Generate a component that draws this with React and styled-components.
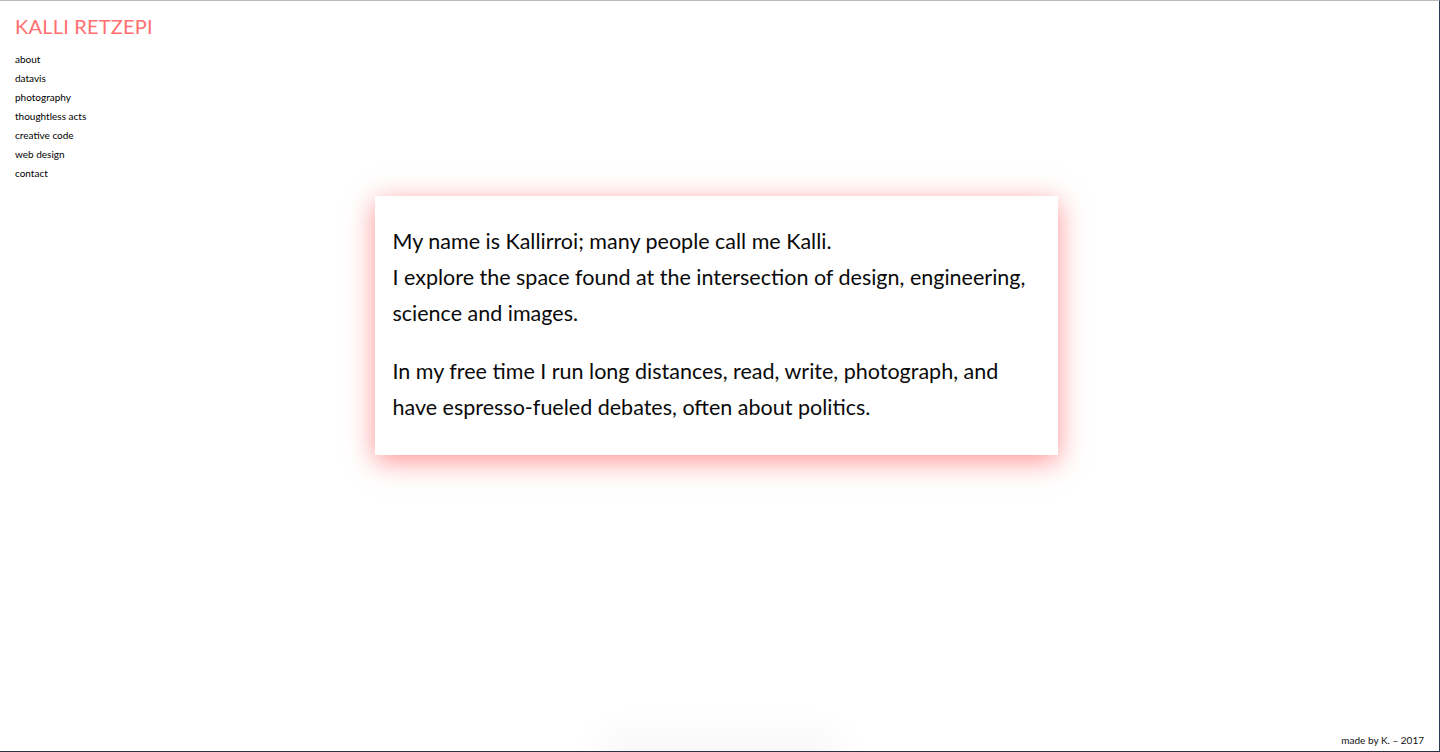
import React from 'react';
import styled, { createGlobalStyle } from 'styled-components';

const GlobalStyle = createGlobalStyle`
  html, body {
    margin: 0;
    padding: 0;
    background: #fff;
  }
  body {
    font-family: Lato, "Open Sans", sans-serif;
    color: #111;
  }
`;

const Frame = styled.div`
  box-sizing: border-box;
  height: 752px;
  display: flex;
  flex-direction: column;
  border-top: 1px solid #b8b8b8;
  border-right: 1px solid #2f3b55;
  border-bottom: 1px solid #2a3344;
  overflow: hidden;
`;

const Header = styled.header`
  padding: 13px 0 0 15px;
`;

const Title = styled.h1`
  margin: 0;
  font-size: 20px;
  font-weight: 400;
  letter-spacing: 0.2px;
  color: #ff6f6f;
  line-height: 24px;
`;

const Nav = styled.nav`
  display: flex;
  flex-direction: column;
  margin-top: 12px;
`;

const NavLink = styled.a`
  font-size: 10px;
  line-height: 19px;
  color: #000;
  text-decoration: none;
`;

const Main = styled.main`
  flex: 1;
  display: flex;
  justify-content: center;
  padding: 13px 7px 0 0;
`;

const Card = styled.section`
  box-sizing: border-box;
  width: 683px;
  height: 259px;
  padding: 27px 18px;
  background: #fff;
  box-shadow: 0 6px 26px rgba(255, 100, 100, 0.7);
  font-size: 21.5px;
  line-height: 36px;
  color: #0a0a0a;
`;

const Para = styled.p`
  margin: 0 0 22px;
`;

const Footer = styled.footer`
  position: relative;
  display: flex;
  justify-content: flex-end;
  padding: 0 15px 4px 0;
  font-size: 10px;
  line-height: 14px;
`;

const Tab = styled.div`
  position: absolute;
  left: 613px;
  bottom: -1px;
  width: 214px;
  height: 1px;
  background: #ddd;
  box-shadow: 0 0 40px 12px rgba(0, 0, 0, 0.06);
`;

const links = [
  'about',
  'datavis',
  'photography',
  'thoughtless acts',
  'creative code',
  'web design',
  'contact',
];

const App = () => {
  return (
    <>
      <GlobalStyle />
      <Frame>
        <Header>
          <Title>KALLI RETZEPI</Title>
          <Nav>
            {links.map((link) => (
              <NavLink key={link} href="#">
                {link}
              </NavLink>
            ))}
          </Nav>
        </Header>
        <Main>
          <Card>
            <Para>
              My name is Kallirroi; many people call me Kalli.
              <br />
              I explore the space found at the intersection of design,
              engineering, science and images.
            </Para>
            <Para>
              In my free time I run long distances, read, write, photograph,
              and have espresso-fueled debates, often about politics.
            </Para>
          </Card>
        </Main>
        <Footer>
          <Tab />
          made by K. – 2017
        </Footer>
      </Frame>
    </>
  );
};

export default App;
